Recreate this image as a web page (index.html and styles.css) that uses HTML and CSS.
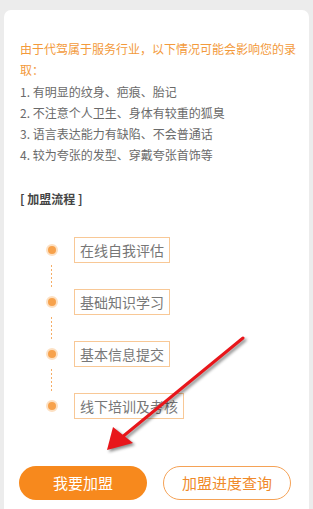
FILE: index.html
```html
<!DOCTYPE html>
<html lang="zh-CN">

<head>
    <meta charset="UTF-8">
    <meta name="viewport" content="width=device-width, initial-scale=1.0">
    <title>加盟</title>
    <link rel="stylesheet" href="styles.css">
</head>

<body>
    <div class="card">
        <div class="notice">
            <p class="lead">由于代驾属于服务行业，以下情况可能会影响您的录取：</p>
            <p>1. 有明显的纹身、疤痕、胎记</p>
            <p>2. 不注意个人卫生、身体有较重的狐臭</p>
            <p>3. 语言表达能力有缺陷、不会普通话</p>
            <p>4. 较为夸张的发型、穿戴夸张首饰等</p>
        </div>

        <h3 class="title">[ 加盟流程 ]</h3>

        <div class="steps">
            <div class="step"><span class="dot"></span><span class="box">在线自我评估</span></div>
            <div class="line"></div>
            <div class="step"><span class="dot"></span><span class="box">基础知识学习</span></div>
            <div class="line"></div>
            <div class="step"><span class="dot"></span><span class="box">基本信息提交</span></div>
            <div class="line"></div>
            <div class="step"><span class="dot"></span><span class="box">线下培训及考核</span></div>
        </div>

        <div class="actions">
            <button class="btn primary">我要加盟</button>
            <button class="btn outline">加盟进度查询</button>
        </div>
    </div>

    <!-- 标注箭头 -->
    <svg class="arrow" width="313" height="509" viewBox="0 0 313 509">
        <line x1="243" y1="338" x2="121" y2="438" stroke="#e8161b" stroke-width="3" stroke-linecap="round" />
        <polygon points="107,450 113,427 133,443" fill="#e8161b" />
    </svg>
</body>

</html>
```

FILE: styles.css
```css
* {
    margin: 0;
    padding: 0;
    box-sizing: border-box;
    font-family: "Noto Sans CJK SC", "Noto Sans", sans-serif;
}

html,
body {
    height: 100%;
    overflow: hidden;
}

body {
    position: relative;
    background-color: #ececec;
}

.card {
    margin: 10px 4px 0;
    background-color: #fff;
    border-radius: 7px 7px 0 0;
    padding: 28px 10px 0 16px;
    height: calc(100% - 10px);
}

.notice p {
    font-size: 12px;
    line-height: 21.3px;
    color: #6a6a6a;
}

.notice .lead {
    color: #f39a3b;
}

.title {
    margin-top: 22px;
    font-size: 12px;
    line-height: 21px;
    font-weight: bold;
    color: #444;
}

.steps {
    margin-top: 28px;
    padding-left: 26px;
}

.step {
    display: flex;
    align-items: center;
    height: 26px;
}

.dot {
    width: 12px;
    height: 12px;
    border-radius: 50%;
    background-color: #f7a24c;
    border: 2px solid #fde0c2;
    margin-right: 16px;
}

.box {
    height: 26px;
    line-height: 24px;
    padding: 0 5px;
    font-size: 14px;
    color: #777;
    border: 1px solid #f8c896;
}

.line {
    width: 1px;
    height: 22px;
    margin: 2px 0 2px 5px;
    background-image: linear-gradient(#f5ad66 50%, transparent 0);
    background-size: 1px 4px;
}

.actions {
    display: flex;
    gap: 16px;
    margin-top: 47px;
    margin-left: -1px;
}

.btn {
    width: 128px;
    height: 34px;
    border-radius: 17px;
    font-size: 15px;
    cursor: pointer;
}

.btn.primary {
    background-color: #f7891d;
    border: none;
    color: #fff;
}

.btn.outline {
    background-color: #fff;
    border: 1px solid #f5a256;
    color: #f08a2a;
}

.arrow {
    position: absolute;
    top: 0;
    left: 0;
    pointer-events: none;
    filter: drop-shadow(2px 2px 1.5px rgba(0, 0, 0, 0.45));
}
```
